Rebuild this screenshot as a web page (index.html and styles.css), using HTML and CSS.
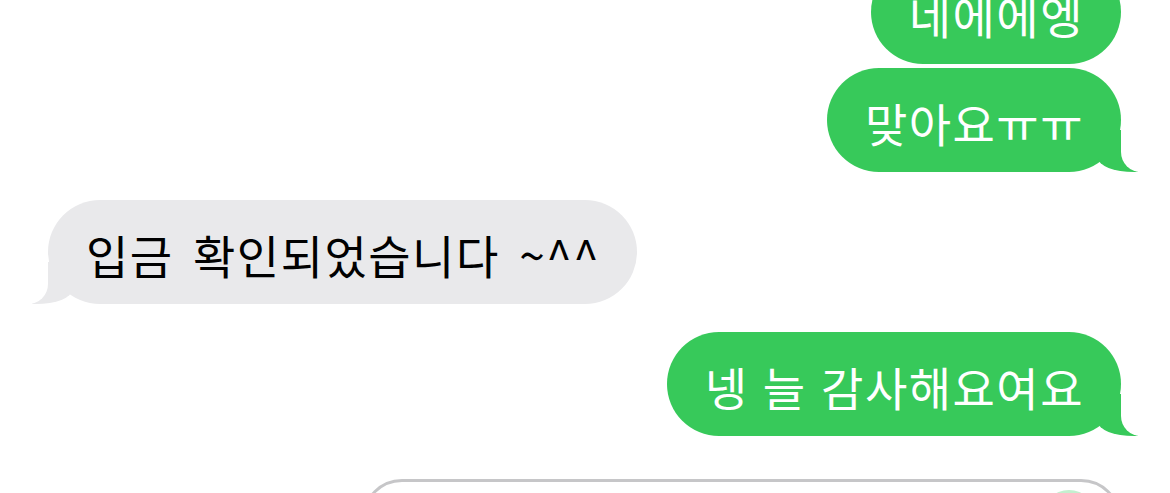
FILE: index.html
```html
<!DOCTYPE html>
<html lang="ko">
<head>
    <meta charset="UTF-8">
    <meta name="viewport" content="width=device-width, initial-scale=1.0">
    <title>메시지</title>
    <link rel="stylesheet" href="styles.css">
</head>
<body>
    <div class="thread">
        <div class="bubble sent">네에에엥</div>
        <div class="bubble sent tail">맞아요ㅠㅠ</div>
        <div class="bubble received tail">입금 확인되었습니다 ~^^</div>
        <div class="bubble sent tail">넹 늘 감사해요여요</div>

        <div class="composer">
            <div class="send-button"></div>
        </div>
    </div>
</body>
</html>
```

FILE: styles.css
```css
body {
    margin: 0;
    height: 493px;
    overflow: hidden;
    background-color: #fff;
    font-family: "Noto Sans CJK KR", "Noto Sans", sans-serif;
}
.thread {
    display: flex;
    flex-direction: column;
    margin-top: -40px;
    padding: 0 49px 0 48px;
}
.bubble {
    position: relative;
    height: 104px;
    box-sizing: border-box;
    padding: 4px 37px 0 38px;
    line-height: 100px;
    font-size: 46px;
    letter-spacing: 1.5px;
    border-radius: 52px;
    white-space: nowrap;
}
.sent {
    align-self: flex-end;
    background-color: #37c95a;
    color: #fff;
    margin-top: 4px;
}
.received {
    align-self: flex-start;
    background-color: #e9e9eb;
    color: #000;
    word-spacing: 5px;
}
/* 그룹 사이 간격 */
.sent.tail + .received,
.received + .sent {
    margin-top: 28px;
}
.sent:first-child {
    margin-top: 0;
}

/* 말풍선 꼬리 */
.tail::before,
.tail::after {
    content: "";
    position: absolute;
    bottom: 0;
}
.sent.tail::before {
    right: -17px;
    width: 40px;
    height: 42px;
    background-color: #37c95a;
    border-bottom-left-radius: 36px 14px;
}
.sent.tail::after {
    right: -20px;
    width: 20px;
    height: 44px;
    background-color: #fff;
    border-bottom-left-radius: 20px;
}
.received.tail::before {
    left: -16px;
    width: 40px;
    height: 42px;
    background-color: #e9e9eb;
    border-bottom-right-radius: 36px 14px;
}
.received.tail::after {
    left: -20px;
    width: 20px;
    height: 44px;
    background-color: #fff;
    border-bottom-right-radius: 20px;
}

.composer {
    position: relative;
    align-self: flex-end;
    width: 759px;
    height: 80px;
    margin-top: 43px;
    border: 3px solid #c6c6c8;
    border-radius: 40px;
    box-sizing: border-box;
}
.send-button {
    position: absolute;
    top: 8px;
    right: 22px;
    width: 54px;
    height: 54px;
    border-radius: 50%;
    background-color: #c4efcf;
}
```
